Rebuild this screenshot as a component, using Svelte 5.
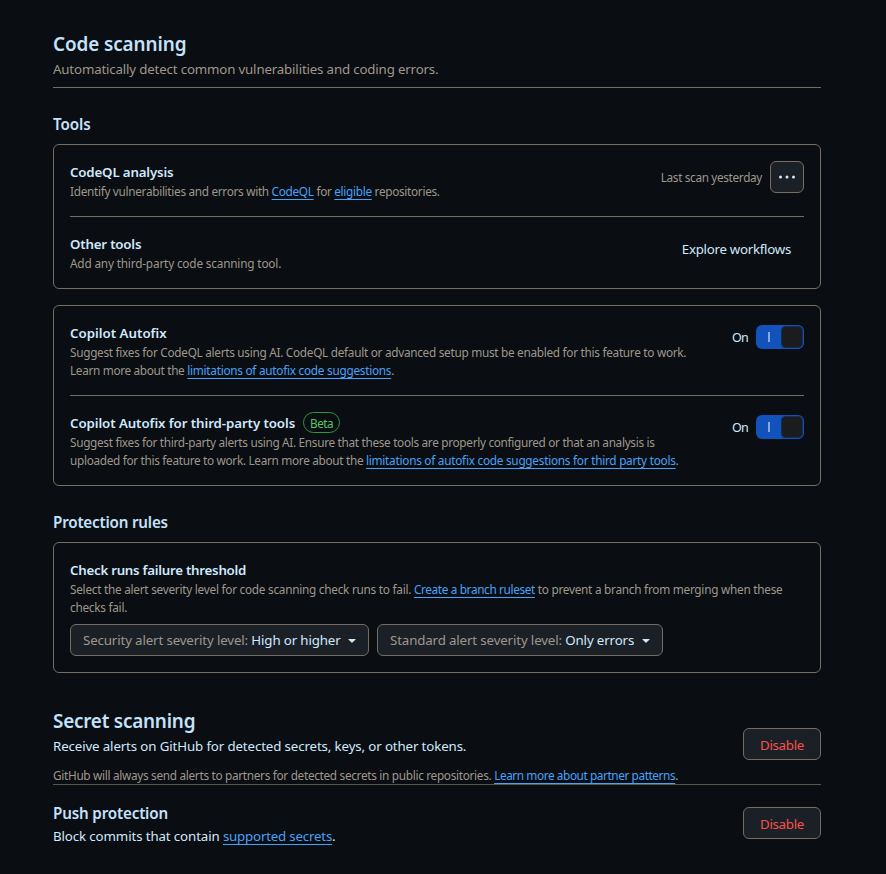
<script>
  let autofix = $state(true);
  let thirdParty = $state(true);
</script>

{#snippet toggle(on, flip, label)}
  <div class="toggle-wrap">
    <span class="on">{on ? 'On' : 'Off'}</span>
    <button class="toggle" class:off={!on} aria-pressed={on} aria-label={label} onclick={flip}>
      <span class="half"><i class="bar"></i></span>
      <span class="knob"></span>
    </button>
  </div>
{/snippet}

{#snippet caret()}
  <svg class="caret" width="16" height="16" viewBox="0 0 16 16" aria-hidden="true">
    <path fill="currentColor" d="m4.427 7.427 3.396 3.396a.25.25 0 0 0 .354 0l3.396-3.396A.25.25 0 0 0 11.396 7H4.604a.25.25 0 0 0-.177.427Z" />
  </svg>
{/snippet}

<main>
  <header>
    <h2 class="s-code">Code scanning</h2>
    <p class="sub">Automatically detect common vulnerabilities and coding errors.</p>
  </header>

  <h3 class="tools">Tools</h3>
  <section class="box">
    <div class="row">
      <div class="info">
        <h4 class="s-codeql">CodeQL analysis</h4>
        <p class="note s-identify">Identify vulnerabilities and errors with <a href="#codeql">CodeQL</a> for <a href="#eligible">eligible</a> repositories.</p>
      </div>
      <div class="side">
        <span class="scan">Last scan yesterday</span>
        <button class="btn kebab" aria-label="More options">
          <svg width="16" height="16" viewBox="0 0 16 16" aria-hidden="true">
            <path fill="currentColor" d="M0 8a1.5 1.5 0 1 1 3 0 1.5 1.5 0 0 1-3 0Zm6.5 0a1.5 1.5 0 1 1 3 0 1.5 1.5 0 0 1-3 0ZM13 8a1.5 1.5 0 1 1 3 0 1.5 1.5 0 0 1-3 0Z" />
          </svg>
        </button>
      </div>
    </div>
    <div class="row">
      <div class="info">
        <h4 class="s-other">Other tools</h4>
        <p class="note s-add">Add any third-party code scanning tool.</p>
      </div>
      <button class="explore">Explore workflows</button>
    </div>
  </section>

  <section class="box second">
    <div class="row">
      <div class="info">
        <h4>Copilot Autofix</h4>
        <p class="note s-suggest">Suggest fixes for CodeQL alerts using AI. CodeQL default or advanced setup must be enabled for this feature to work.</p>
        <p class="note s-learn">Learn more about the <a href="#limits">limitations of autofix code suggestions</a>.</p>
      </div>
      {@render toggle(autofix, () => (autofix = !autofix), 'Copilot Autofix')}
    </div>
    <div class="row">
      <div class="info">
        <div class="title-line">
          <h4 class="s-third">Copilot Autofix for third-party tools</h4>
          <span class="beta">Beta</span>
        </div>
        <p class="note s-third-a">Suggest fixes for third-party alerts using AI. Ensure that these tools are properly configured or that an analysis is</p>
        <p class="note s-third-b">uploaded for this feature to work. Learn more about the <a href="#third">limitations of autofix code suggestions for third party tools</a>.</p>
      </div>
      {@render toggle(thirdParty, () => (thirdParty = !thirdParty), 'Copilot Autofix for third-party tools')}
    </div>
  </section>

  <h3 class="rules">Protection rules</h3>
  <section class="box">
    <div class="rule">
      <div class="info">
        <h4 class="s-check">Check runs failure threshold</h4>
        <p class="note s-select">Select the alert severity level for code scanning check runs to fail. <a href="#ruleset">Create a branch ruleset</a> to prevent a branch from merging when these</p>
        <p class="note s-select">checks fail.</p>
      </div>
      <div class="selects">
        <button class="btn select first"><span><span class="key">Security alert severity level:</span> High or higher</span>{@render caret()}</button>
        <button class="btn select"><span><span class="key">Standard alert severity level:</span> Only errors</span>{@render caret()}</button>
      </div>
    </div>
  </section>

  <section class="secret">
    <div>
      <h2 class="s-secret">Secret scanning</h2>
      <p class="lead s-receive">Receive alerts on GitHub for detected secrets, keys, or other tokens.</p>
      <p class="note partner">GitHub will always send alerts to partners for detected secrets in public repositories. <a href="#partner">Learn more about partner patterns</a>.</p>
    </div>
    <button class="btn danger">Disable</button>
  </section>

  <section class="push">
    <div>
      <h3 class="s-push">Push protection</h3>
      <p class="lead s-block">Block commits that contain <a href="#secrets">supported secrets</a>.</p>
    </div>
    <button class="btn danger">Disable</button>
  </section>
</main>

<style>
  :global(body) { background: #0a0d12; }
  main {
    box-sizing: border-box;
    width: 886px;
    height: 874px;
    padding: 29px 65px 0 53px;
    overflow: hidden;
    background: #0a0d12;
    color: #d0e9fc;
    font-family: "Noto Sans", "Open Sans", sans-serif;
    font-size: 13.3px;
    line-height: 21px;
    white-space: nowrap;
  }
  h2, h3, h4, p { margin: 0; }
  h2 { font-size: 18.9px; line-height: 30px; font-weight: 600; color: #c4e2fb; }
  h3 { font-size: 15.2px; line-height: 24px; font-weight: 600; color: #c4e2fb; }
  h4 { font-size: 13.3px; line-height: 21px; font-weight: 600; }
  button { font: inherit; color: inherit; padding: 0; cursor: pointer; letter-spacing: inherit; }
  a {
    color: #47a2f8;
    text-decoration: underline;
    text-decoration-thickness: 1px;
    text-underline-offset: 3px;
    text-decoration-skip-ink: none;
  }

  header { box-sizing: border-box; height: 59px; border-bottom: 1px solid #766c5f; }
  .s-code { letter-spacing: -0.1px; }
  .sub { color: #9f978b; letter-spacing: -0.17px; }
  .tools { margin: 24px 0 8px; letter-spacing: -0.1px; }
  .rules { margin: 24px 0 8px; letter-spacing: -0.2px; }

  .box { box-sizing: border-box; border: 1px solid #766c5f; border-radius: 6px; padding: 0 16px; }
  .second { margin-top: 16px; }
  .row { display: flex; justify-content: space-between; align-items: flex-start; padding: 16px 0; }
  .row + .row { border-top: 1px solid #766c5f; }
  .info h4 { padding-top: 1px; margin-bottom: -1px; }
  .note { font-size: 11.8px; line-height: 18px; color: #9f978b; }
  .side { display: flex; align-items: center; gap: 8px; height: 32px; }
  .scan { font-size: 11.8px; line-height: 18px; color: #9f978b; letter-spacing: -0.345px; margin-top: -1px; }
  .btn { box-sizing: border-box; height: 32px; border: 1px solid #766c5f; border-radius: 6px; background: #1b2027; }
  .kebab { width: 34px; display: flex; align-items: center; justify-content: center; }
  .explore { border: 0; background: none; height: 32px; padding: 0 13px; letter-spacing: -0.28px; }

  .toggle-wrap { display: flex; align-items: center; gap: 8px; margin-top: 3px; height: 24px; }
  .on { font-size: 12.5px; letter-spacing: -0.7px; padding-top: 1px; }
  .toggle { display: flex; box-sizing: border-box; width: 48px; height: 24px; border: 0; border-radius: 6px; background: #1153ba; overflow: hidden; }
  .toggle.off { flex-direction: row-reverse; background: #1b2027; }
  .half { width: 24px; height: 24px; display: flex; align-items: center; justify-content: center; }
  .bar { width: 2px; height: 10px; margin-left: 2px; background: #88a9dd; }
  .knob { box-sizing: border-box; width: 24px; height: 24px; border: 1px solid #1153ba; border-radius: 6px; background: #1b1c1e; box-shadow: inset 0 0 0 1px #142c55; }

  .title-line { display: flex; align-items: center; height: 21px; gap: 8px; }
  .beta {
    box-sizing: border-box;
    width: 37px;
    height: 21px;
    margin-top: -1px;
    border: 1px solid #2a9b41;
    border-radius: 11px;
    color: #55c466;
    font-size: 11.8px;
    line-height: 21px;
    text-align: center;
    letter-spacing: -0.5px;
  }

  .rule { padding: 16px 0; }
  .selects { display: flex; gap: 8px; margin-top: 8px; }
  .select { display: flex; align-items: center; justify-content: space-between; width: 286px; padding: 0 8px 0 12px; letter-spacing: -0.14px; }
  .select.first { width: 299px; }
  .key { color: #9f978b; }

  .secret, .push { display: flex; justify-content: space-between; align-items: flex-start; }
  .secret { box-sizing: border-box; height: 79px; margin-top: 33px; border-bottom: 1px solid #5b564c; }
  .partner { margin-top: 9px; letter-spacing: -0.31px; }
  .partner a { letter-spacing: -0.41px; }
  .danger { width: 78px; padding-top: 2px; color: #f85149; letter-spacing: -0.3px; }
  .secret .danger { margin-top: 22px; }
  .push { padding-top: 16px; }
  .push .lead { margin-top: 1px; }
  .push .danger { margin-top: 6px; }

  .s-codeql { letter-spacing: -0.17px; }
  .s-identify { letter-spacing: -0.31px; }
  .s-other { letter-spacing: -0.2px; }
  .s-add { letter-spacing: -0.18px; }
  .s-suggest { letter-spacing: -0.29px; }
  .s-learn { letter-spacing: -0.33px; }
  .s-learn a { letter-spacing: -0.265px; }
  .s-third { letter-spacing: -0.09px; }
  .s-third-a { letter-spacing: -0.315px; }
  .s-third-b { letter-spacing: -0.315px; }
  .s-third-b a { letter-spacing: -0.26px; }
  .s-check { letter-spacing: -0.26px; }
  .s-select { letter-spacing: -0.26px; }
  .s-select a { letter-spacing: -0.36px; }
  .s-secret { letter-spacing: -0.22px; }
  .s-receive { letter-spacing: -0.13px; }
  .s-push { letter-spacing: -0.17px; }
  .s-block { letter-spacing: -0.12px; }
  .s-block a { letter-spacing: -0.2px; }
</style>
